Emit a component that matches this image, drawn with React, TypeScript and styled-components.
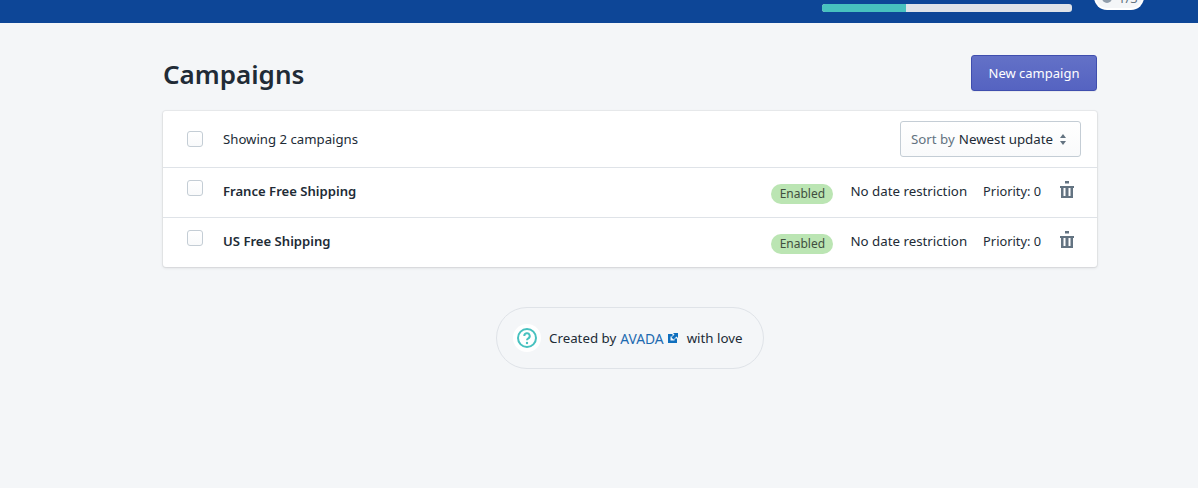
import React from "react";
import styled, { createGlobalStyle } from "styled-components";

const GlobalStyle = createGlobalStyle`
  html, body {
    margin: 0;
    padding: 0;
    background: #f4f6f8;
    font-family: "Noto Sans", "Open Sans", sans-serif;
    color: #212b36;
    overflow: hidden;
  }
  * { box-sizing: border-box; }
`;

const Page = styled.div`
  width: 1198px;
  height: 488px;
`;

const TopBar = styled.header`
  position: relative;
  height: 23px;
  background: #0d4697;
  display: flex;
  align-items: flex-start;
  padding: 4px 0 0 822px;
`;

const Progress = styled.div`
  width: 250px;
  height: 8px;
  background: #dfe3e8;
  border-radius: 3px;
  overflow: hidden;
`;

const ProgressFill = styled.div`
  height: 100%;
  background: #47c1bf;
`;

const StepBadge = styled.div`
  position: absolute;
  left: 1094px;
  bottom: 13px;
  width: 50px;
  height: 26px;
  padding: 0 0 3px 6px;
  display: flex;
  align-items: flex-end;
  gap: 6px;
  background: #f4f6f8;
  border: 2px solid #fff;
  border-top: none;
  border-radius: 0 0 13px 13px;
  font-size: 13px;
  line-height: 14px;
  color: #637381;
  overflow: hidden;
`;

const StepDot = styled.span`
  flex: none;
  width: 10px;
  height: 10px;
  margin-bottom: 2px;
  border-radius: 50%;
  background: #919eab;
`;

const Main = styled.main`
  width: 934px;
  margin-left: 163px;
`;

const TitleRow = styled.div`
  display: flex;
  align-items: flex-start;
  justify-content: space-between;
  padding-top: 32px;
  height: 88px;
`;

const Title = styled.h1`
  margin: 0;
  font-size: 26px;
  line-height: 38px;
  font-weight: 600;
  color: #212b36;
`;

const PrimaryButton = styled.button`
  width: 126px;
  height: 36px;
  padding: 0;
  border: 1px solid #3f4eae;
  border-radius: 3px;
  background: linear-gradient(180deg, #6371c7, #5563c1);
  color: #fff;
  font: 400 13px "Noto Sans", "Open Sans", sans-serif;
  box-shadow: 0 1px 0 rgba(22, 29, 37, 0.05);
`;

const Card = styled.section`
  background: #fff;
  border-radius: 3px;
  box-shadow: 0 0 0 1px rgba(63, 63, 68, 0.05), 0 1px 3px rgba(63, 63, 68, 0.15);
`;

const ToolbarRow = styled.div`
  display: flex;
  align-items: center;
  height: 57px;
  padding: 0 16px 0 24px;
  border-bottom: 1px solid #dfe3e8;
`;

const CampaignRow = styled.div<{ $last?: boolean }>`
  display: flex;
  align-items: center;
  height: ${(p) => (p.$last ? "49px" : "50px")};
  padding: 0 23px 0 24px;
  border-bottom: ${(p) => (p.$last ? "none" : "1px solid #dfe3e8")};
`;

const Checkbox = styled.span<{ $raised?: boolean }>`
  flex: none;
  width: 16px;
  height: 16px;
  margin-right: 20px;
  margin-top: ${(p) => (p.$raised ? "-9px" : "0")};
  border: 1px solid #c4cdd5;
  border-radius: 3px;
  background: linear-gradient(180deg, #fff, #f9fafb);
`;

const Muted = styled.span`
  font-size: 13.2px;
  color: #212b36;
`;

const SortButton = styled.div`
  margin-left: auto;
  width: 181px;
  height: 36px;
  display: flex;
  align-items: center;
  padding: 0 14px 0 10px;
  border: 1px solid #c4cdd5;
  border-radius: 3px;
  background: linear-gradient(180deg, #fff, #f9fafb);
  font-size: 13.3px;
  white-space: nowrap;
`;

const SortLabel = styled.span`
  color: #637381;
  margin-right: 4px;
`;

const SortValue = styled.span`
  color: #212b36;
`;

const SortArrows = styled.svg`
  margin-left: auto;
  flex: none;
`;

const CampaignName = styled.span`
  font-size: 13.1px;
  font-weight: 600;
  color: #212b36;
  margin-top: -3px;
`;

const Badge = styled.span`
  margin-left: auto;
  height: 20px;
  width: 62px;
  display: flex;
  align-items: center;
  justify-content: center;
  border-radius: 10px;
  background: #bbe5b3;
  color: #414f3e;
  font-size: 12px;
  margin-top: 2px;
`;

const Meta = styled.span<{ $gap: number; $size: number }>`
  margin-left: ${(p) => p.$gap}px;
  font-size: ${(p) => p.$size}px;
  color: #212b36;
  white-space: nowrap;
  margin-top: -3px;
`;

const TrashButton = styled.span`
  display: flex;
  margin-left: 19px;
  margin-top: -6px;
  color: #637381;
`;

const Footer = styled.div`
  display: flex;
  justify-content: center;
  padding: 40px 0 0 0;
`;

const FooterPill = styled.div`
  width: 268px;
  height: 62px;
  display: flex;
  align-items: center;
  padding-left: 16px;
  border: 1px solid #dfe3e8;
  border-radius: 31px;
  font-size: 13.3px;
  color: #212b36;
  white-space: nowrap;
`;

const HelpCircle = styled.span`
  flex: none;
  width: 28px;
  height: 28px;
  margin-right: 8px;
  border-radius: 50%;
  background: #fff;
  display: flex;
  align-items: center;
  justify-content: center;
`;

const BrandLink = styled.a`
  display: inline-flex;
  align-items: center;
  gap: 4px;
  margin: 0 9px 0 4px;
  color: #1c6ab0;
  text-decoration: none;
  font-size: 13.8px;
`;

function TrashIcon() {
  return (
    <svg width="14" height="17" viewBox="0 0 14 17" fill="currentColor">
      <rect x="5" y="0" width="4" height="2.500" />
      <rect x="0" y="5" width="14" height="2" />
      <path d="M1 7h2.500v8h2V7h3v8h2V7H13v10H1z" />
    </svg>
  );
}

function ExternalIcon() {
  return (
    <svg width="10" height="10" viewBox="0 0 10 10" fill="#0f6fbe">
      <path d="M0 1h4.500v2.500H2.500v4h4V5.500H9V10H0z" />
      <path d="M5 0h5v5L8.500 3.500 5.500 6.500 3.500 4.500 6.500 1.500z" />
    </svg>
  );
}

function HelpIcon() {
  return (
    <svg width="20" height="20" viewBox="0 0 20 20" fill="none">
      <circle cx="10" cy="10" r="9" stroke="#47c1bf" strokeWidth="2" />
      <path d="M7.300 8a2.700 2.700 0 1 1 4 2.300c-.9.500-1.300 1-1.300 1.900" stroke="#47c1bf" strokeWidth="2" />
      <circle cx="10" cy="15" r="1.200" fill="#47c1bf" />
    </svg>
  );
}

const campaigns = ["France Free Shipping", "US Free Shipping"];

export default function App() {
  return (
    <Page>
      <GlobalStyle />
      <TopBar>
        <Progress>
          <ProgressFill style={{ width: "33.6%" }} />
        </Progress>
        <StepBadge>
          <StepDot />
          <span>1/3</span>
        </StepBadge>
      </TopBar>
      <Main>
        <TitleRow>
          <Title>Campaigns</Title>
          <PrimaryButton>New campaign</PrimaryButton>
        </TitleRow>
        <Card>
          <ToolbarRow>
            <Checkbox />
            <Muted>Showing 2 campaigns</Muted>
            <SortButton>
              <SortLabel>Sort by</SortLabel>
              <SortValue>Newest update</SortValue>
              <SortArrows width="6" height="11" viewBox="0 0 6 11" fill="#637381">
                <path d="M3 0l3 4H0zM3 11L0 7h6z" />
              </SortArrows>
            </SortButton>
          </ToolbarRow>
          {campaigns.map((name, i) => (
            <CampaignRow key={name} $last={i === campaigns.length - 1}>
              <Checkbox $raised />
              <CampaignName>{name}</CampaignName>
              <Badge>Enabled</Badge>
              <Meta $gap={17} $size={13.3}>No date restriction</Meta>
              <Meta $gap={16} $size={12.8}>Priority: 0</Meta>
              <TrashButton>
                <TrashIcon />
              </TrashButton>
            </CampaignRow>
          ))}
        </Card>
        <Footer>
          <FooterPill>
            <HelpCircle>
              <HelpIcon />
            </HelpCircle>
            Created by
            <BrandLink>
              AVADA <ExternalIcon />
            </BrandLink>
            with love
          </FooterPill>
        </Footer>
      </Main>
    </Page>
  );
}
